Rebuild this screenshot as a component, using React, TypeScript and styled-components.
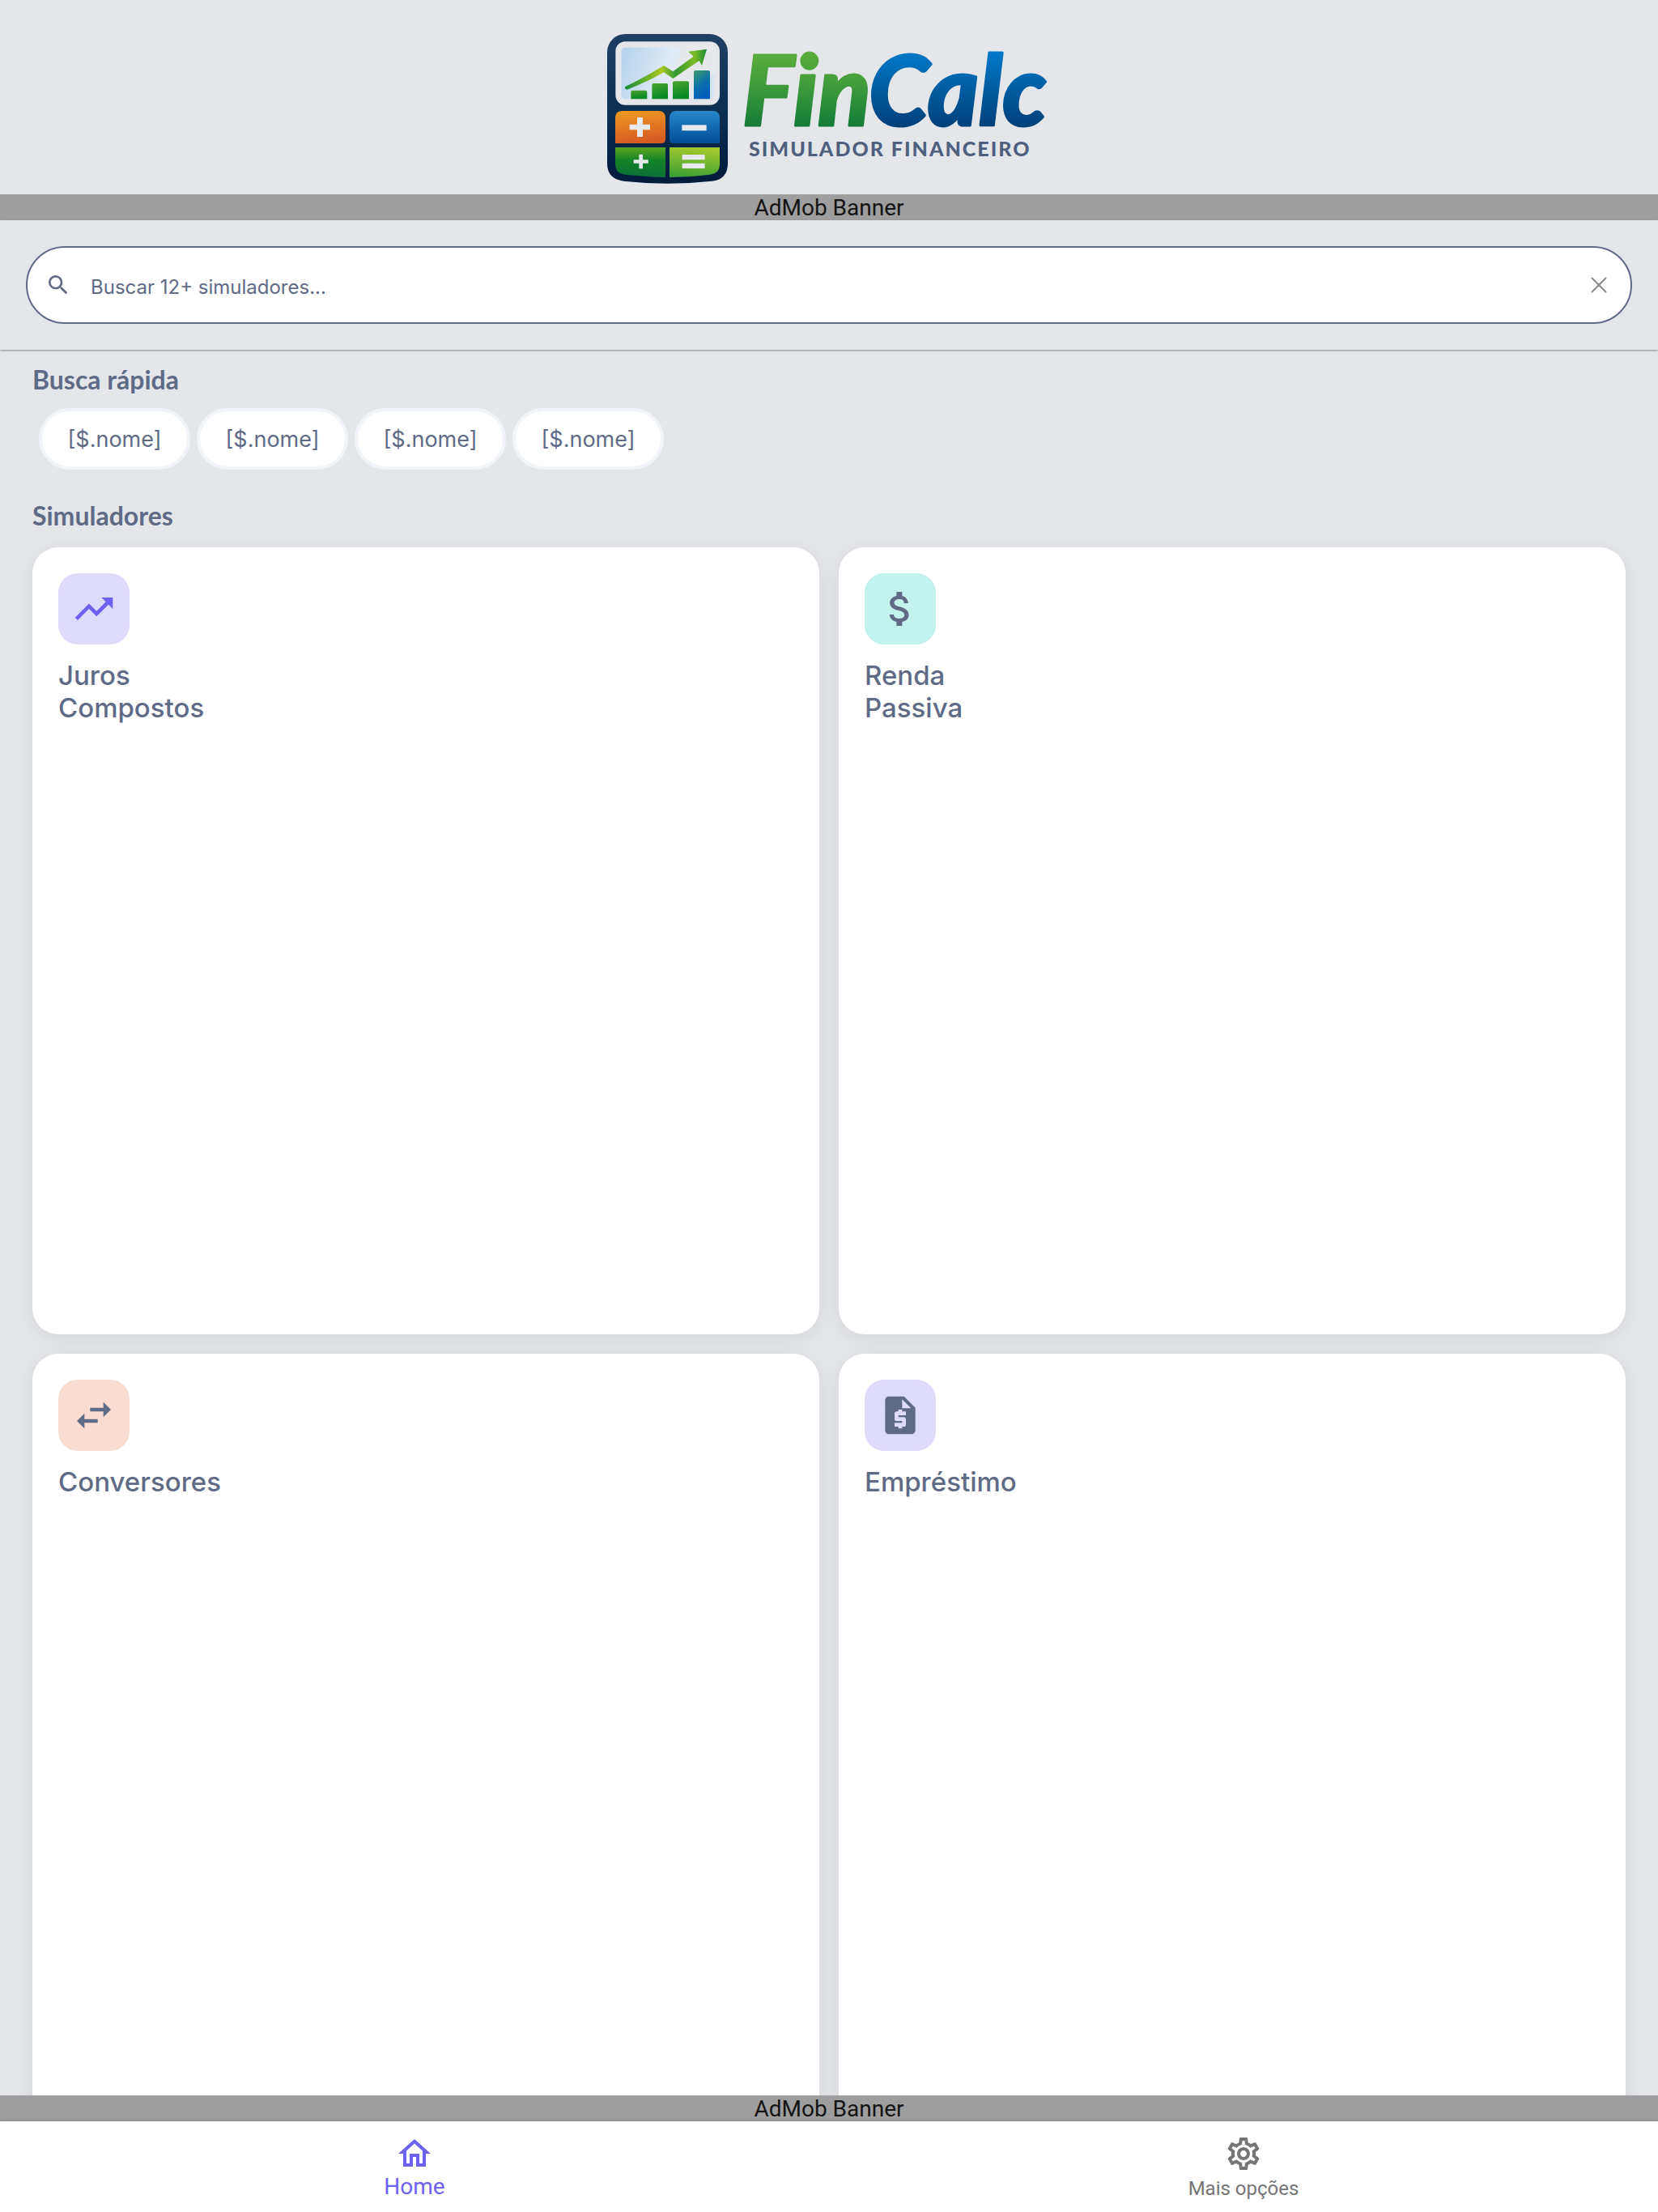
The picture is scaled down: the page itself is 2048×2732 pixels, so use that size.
import React from "react";
import styled, { createGlobalStyle } from "styled-components";
import {
  MdAttachMoney,
  MdOutlineHome,
  MdOutlineSettings,
  MdSearch,
  MdSwapHoriz,
  MdTrendingUp,
} from "react-icons/md";

const color = {
  page: "#e5e6ea",
  surface: "#ffffff",
  ink: "#5f6a87",
  primary: "#6f61ef",
  muted: "#757575",
  banner: "#9e9e9e",
  chipBorder: "#f1f4f8",
  lilac: "#dfdbfc",
  mint: "#c4f2ec",
  peach: "#fadcd1",
};

const GlobalStyle = createGlobalStyle`
  *, *::before, *::after { box-sizing: border-box; }
  body {
    margin: 0;
    background: ${color.page};
    color: ${color.ink};
    font-family: Inter, "Liberation Sans", sans-serif;
  }
  button, input { font: inherit; color: inherit; }
`;

const Screen = styled.div`
  display: flex;
  flex-direction: column;
  height: 100vh;
`;

const Header = styled.header`
  display: flex;
  justify-content: center;
`;

const LogoArt = styled.svg`
  display: block;
  width: 600px;
  max-width: 100%;
`;

const Banner = styled.aside`
  flex: none;
  padding-top: 2px;
  background: ${color.banner};
  color: #141414;
  font: 400 28px/30px Roboto, sans-serif;
  text-align: center;
`;

const SearchArea = styled.form`
  position: relative;
  z-index: 1;
  padding: 32px;
  box-shadow: 0 1px 2px rgba(0, 0, 0, 0.4);
  background: ${color.page};
`;

const SearchField = styled.div`
  display: flex;
  align-items: center;
  gap: 24px;
  height: 96px;
  padding: 0 22px;
  border: 2px solid ${color.ink};
  border-radius: 48px;
  background: ${color.surface};
`;

const SearchLabel = styled.label`
  display: flex;
  font-size: 32px;
`;

const SearchInput = styled.input`
  flex: 1;
  min-width: 0;
  padding: 6px 0 0;
  border: 0;
  outline: 0;
  background: none;
  font-size: 24px;
  line-height: 32px;

  &::placeholder {
    color: ${color.ink};
    opacity: 1;
  }
  &::-webkit-search-cancel-button {
    display: none;
  }
`;

const ClearButton = styled.button`
  display: flex;
  padding: 4px;
  border: 0;
  background: none;
  color: #888888;
`;

const Content = styled.main`
  flex: 1;
  min-height: 0;
  overflow: hidden;
  padding: 16px 40px 0;
`;

const SectionTitle = styled.h2`
  margin: 0;
  font: 700 32px/42px Lato, sans-serif;
`;

const ChipRow = styled.div`
  display: flex;
  flex-wrap: wrap;
  gap: 8px;
  padding: 14px 8px 36px;
`;

const Chip = styled.button`
  min-width: 187px;
  height: 76px;
  padding: 2px 31px 0;
  border: 4px solid ${color.chipBorder};
  border-radius: 38px;
  background: ${color.surface};
  font-size: 27px;
  line-height: 36px;
`;

const CardGrid = styled.div`
  display: grid;
  grid-template-columns: repeat(2, minmax(0, 1fr));
  gap: 24px;
  padding-top: 18px;
`;

const Card = styled.button`
  display: flex;
  flex-direction: column;
  align-items: flex-start;
  justify-content: flex-start;
  gap: 18px;
  aspect-ratio: 1;
  padding: 32px;
  border: 0;
  border-radius: 32px;
  background: ${color.surface};
  box-shadow: 0 4px 24px rgba(0, 0, 0, 0.08);
  text-align: left;
`;

const IconTile = styled.span<{ $tint: string; $ink: string }>`
  display: flex;
  padding: 16px;
  border-radius: 24px;
  background: ${(p) => p.$tint};
  color: ${(p) => p.$ink};
  font-size: 56px;
`;

const CardTitle = styled.span`
  font-size: 33px;
  font-weight: 500;
  line-height: 40px;
  white-space: pre-line;
`;

const NavBar = styled.nav`
  position: relative;
  display: flex;
  flex: none;
  height: 112px;
  background: ${color.surface};
  box-shadow: 0 0 4px rgba(0, 0, 0, 0.2);
`;

const NavLink = styled.a<{ $active?: boolean }>`
  display: flex;
  flex: 1;
  flex-direction: column;
  align-items: center;
  padding-top: 16px;
  color: ${(p) => (p.$active ? color.primary : color.muted)};
  font-family: Roboto, sans-serif;
  font-size: ${(p) => (p.$active ? 28 : 24)}px;
  line-height: ${(p) => (p.$active ? 34 : 38)}px;
  text-decoration: none;

  svg {
    font-size: 48px;
  }
`;

function Logo() {
  return (
    <LogoArt viewBox="724 0 600 240" role="img" aria-label="FinCalc Simulador Financeiro">
      <defs>
        <linearGradient id="body" x1="0" y1="0" x2="0" y2="1">
          <stop offset="0" stopColor="#1f4063" />
          <stop offset="0.5" stopColor="#0d2f50" />
          <stop offset="1" stopColor="#001b3c" />
        </linearGradient>
        <linearGradient id="sky" x1="0" y1="0.3" x2="1" y2="0.5">
          <stop offset="0" stopColor="#b6d4ee" />
          <stop offset="0.5" stopColor="#e0ebf6" />
          <stop offset="0.8" stopColor="#e6e8ec" />
          <stop offset="1" stopColor="#d5e4f2" />
        </linearGradient>
        <linearGradient id="orange" x1="0" y1="0" x2="0.2" y2="1">
          <stop offset="0" stopColor="#ee9c22" />
          <stop offset="1" stopColor="#d85c22" />
        </linearGradient>
        <linearGradient id="blue" x1="0" y1="0" x2="0" y2="1">
          <stop offset="0" stopColor="#2788c9" />
          <stop offset="1" stopColor="#004c98" />
        </linearGradient>
        <linearGradient id="green" x1="0" y1="0" x2="0" y2="1">
          <stop offset="0" stopColor="#5ba521" />
          <stop offset="0.45" stopColor="#128226" />
          <stop offset="1" stopColor="#0a7037" />
        </linearGradient>
        <linearGradient id="lime" x1="0.2" y1="0" x2="0" y2="1">
          <stop offset="0" stopColor="#9dc72d" />
          <stop offset="1" stopColor="#359d36" />
        </linearGradient>
        <linearGradient id="bar" x1="0" y1="0" x2="0.3" y2="1">
          <stop offset="0" stopColor="#4ca32f" />
          <stop offset="1" stopColor="#058a24" />
        </linearGradient>
        <linearGradient id="tallBar" x1="0" y1="0" x2="0.4" y2="1">
          <stop offset="0" stopColor="#3c9a68" />
          <stop offset="0.6" stopColor="#0b6fae" />
          <stop offset="1" stopColor="#005cb9" />
        </linearGradient>
        <linearGradient id="trend" x1="0" y1="0" x2="1" y2="0">
          <stop offset="0" stopColor="#168b3c" />
          <stop offset="0.45" stopColor="#a9c91f" />
          <stop offset="0.62" stopColor="#2f9733" />
          <stop offset="0.85" stopColor="#7dbb22" />
          <stop offset="1" stopColor="#178a36" />
        </linearGradient>
        <linearGradient id="fin" gradientUnits="userSpaceOnUse" x1="0" y1="66" x2="0" y2="158">
          <stop offset="0" stopColor="#58ac3b" />
          <stop offset="0.4" stopColor="#429d3b" />
          <stop offset="1" stopColor="#127a39" />
        </linearGradient>
        <linearGradient id="calc" gradientUnits="userSpaceOnUse" x1="0" y1="66" x2="0" y2="158">
          <stop offset="0" stopColor="#0077c6" />
          <stop offset="1" stopColor="#003f78" />
        </linearGradient>
      </defs>
      <g transform="translate(730 20) scale(0.33333)">
        <path
          d="M128 66H440a67 67 0 0 1 67 67V545q0 60-60 66Q285 629 121 611 60 603 60 545V133a67 67 0 0 1 68-67z"
          fill="url(#body)"
        />
        <rect x="91" y="94" width="386" height="235" rx="36" fill="#e5e6ea" />
        <rect x="113" y="116" width="343" height="191" rx="14" fill="url(#sky)" />
        <path d="M325 116q22 12 2 38-14 16-12 40l-22 50 60 30 103-60V100H325z" fill="#e6e8ec" />
        <path d="M148 307v-26q0-6 6-6h48q6 0 6 6v26z" fill="url(#bar)" />
        <path d="M226 307v-52q0-6 6-6h47q6 0 6 6v52z" fill="url(#bar)" />
        <path d="M303 307v-60q0-6 6-6h48q6 0 6 6v60z" fill="url(#bar)" />
        <path d="M381 307v-100q0-6 6-6h48q6 0 6 6v100z" fill="url(#tallBar)" />
        <path
          d="M127 261Q190 231 270 183L304 205 380 149 361 131 429 122 411 183 401 165 304 231 270 208Q210 243 134 272 122 268 127 261z"
          fill="url(#trend)"
        />
        <path d="M90 471v-94q0-26 26-26h134q26 0 26 26v78q0 16-16 16z" fill="url(#orange)" />
        <path d="M291 455v-78q0-26 26-26h134q26 0 26 26v94H307q-16 0-16-16z" fill="url(#blue)" />
        <path d="M90 486h186v111q-80-3-150-10-36-4-36-40z" fill="url(#green)" />
        <path d="M291 486h186v61q0 36-36 40-70 8-150 10z" fill="url(#lime)" />
        <g fill="#e8e9ec">
          <path d="M171 375h21v26h27v20h-27v26h-21v-26h-28v-20h28z" />
          <path d="M337 403h91v21h-91z" />
          <path d="M178 512h14v20h20v13h-20v20h-14v-20h-20v-13h20z" />
          <path d="M338 513h84v19h-84zM338 545h84v19h-84z" />
        </g>
      </g>
      <g
        fontFamily="Lato, sans-serif"
        fontWeight="900"
        fontStyle="italic"
        fontSize="120"
        strokeWidth="3"
        strokeLinejoin="round"
      >
        <text x="917" y="155" fill="url(#fin)" stroke="url(#fin)">
          Fin
        </text>
        <text x="1073" y="155" fill="url(#calc)" stroke="url(#calc)">
          Calc
        </text>
      </g>
      <text
        x="925"
        y="193"
        fill="#4f5f80"
        fontFamily="Lato, sans-serif"
        fontWeight="900"
        fontSize="25"
        letterSpacing="2"
      >
        SIMULADOR FINANCEIRO
      </text>
    </LogoArt>
  );
}

function CloseIcon() {
  return (
    <svg width="26" height="26" viewBox="0 0 26 26" fill="none" stroke="currentColor" strokeWidth="2" aria-hidden="true">
      <path d="M4.5 4.5l17 17M21.5 4.5l-17 17" strokeLinecap="round" />
    </svg>
  );
}

function LoanIcon() {
  return (
    <svg width="1em" height="1em" viewBox="0 0 24 24" fill="currentColor" aria-hidden="true">
      <path
        fillRule="evenodd"
        d="M14 2H6c-1.1 0-2 .9-2 2v16c0 1.1.9 2 2 2h12c1.1 0 2-.9 2-2V8zM13 3.5V8.2h4.7zM11 9h2v1h2v2h-4v1h3c.55 0 1 .45 1 1v3c0 .55-.45 1-1 1h-1v1h-2v-1H9v-2h4v-1h-3c-.55 0-1-.45-1-1v-3c0-.55.45-1 1-1h1z"
      />
    </svg>
  );
}

const quickSearches = ["[$.nome]", "[$.nome]", "[$.nome]", "[$.nome]"];

const simulators = [
  { title: "Juros\nCompostos", icon: <MdTrendingUp />, tint: color.lilac, ink: color.primary },
  { title: "Renda\nPassiva", icon: <MdAttachMoney />, tint: color.mint, ink: color.ink },
  { title: "Conversores", icon: <MdSwapHoriz />, tint: color.peach, ink: color.ink },
  { title: "Empréstimo", icon: <LoanIcon />, tint: color.lilac, ink: color.ink },
];

export default function App() {
  return (
    <Screen>
      <GlobalStyle />
      <Header>
        <Logo />
      </Header>
      <Banner>AdMob Banner</Banner>
      <SearchArea role="search" onSubmit={(e) => e.preventDefault()}>
        <SearchField>
          <SearchLabel htmlFor="search" aria-label="Buscar">
            <MdSearch />
          </SearchLabel>
          <SearchInput id="search" type="search" placeholder="Buscar 12+ simuladores..." />
          <ClearButton type="reset" aria-label="Limpar">
            <CloseIcon />
          </ClearButton>
        </SearchField>
      </SearchArea>
      <Content>
        <SectionTitle>Busca rápida</SectionTitle>
        <ChipRow>
          {quickSearches.map((name, i) => (
            <Chip key={i} type="button">
              {name}
            </Chip>
          ))}
        </ChipRow>
        <SectionTitle>Simuladores</SectionTitle>
        <CardGrid>
          {simulators.map((s) => (
            <Card key={s.title} type="button">
              <IconTile $tint={s.tint} $ink={s.ink}>
                {s.icon}
              </IconTile>
              <CardTitle>{s.title}</CardTitle>
            </Card>
          ))}
        </CardGrid>
      </Content>
      <Banner>AdMob Banner</Banner>
      <NavBar>
        <NavLink href="#home" $active aria-current="page">
          <MdOutlineHome />
          Home
        </NavLink>
        <NavLink href="#opcoes">
          <MdOutlineSettings />
          Mais opções
        </NavLink>
      </NavBar>
    </Screen>
  );
}
